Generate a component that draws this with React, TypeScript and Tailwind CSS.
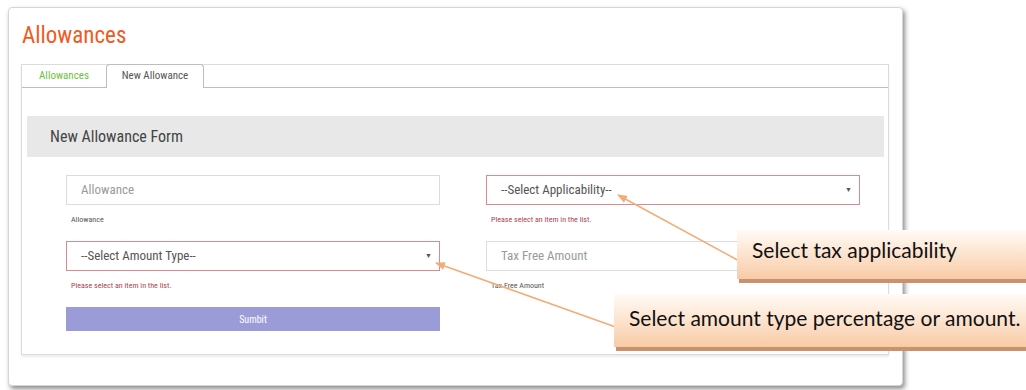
import { ReactNode } from "react";

const cond = "font-['Liberation_Sans_Narrow','Roboto_Condensed',Roboto,sans-serif]";

function Field({ placeholder, select, invalid, note, noteError }: {
  placeholder: string; select?: boolean; invalid?: boolean; note: string; noteError?: boolean;
}) {
  return (
    <div>
      <div
        className={`h-[30px] flex items-center justify-between pl-[14px] pr-[7px] border bg-white ${
          invalid ? "border-[#dc8a8f]" : "border-[#dcdcdc]"
        }`}
      >
        <span className={`text-[13px] ${select ? "text-[#555]" : "text-[#9a9a9a]"}`}>{placeholder}</span>
        {select && <span className="text-[7px] text-[#555]">▼</span>}
      </div>
      <div className="mt-[10px] h-[26px] pl-[5px]">
        <p className={`text-[8px] leading-[10px] ${noteError ? "text-[#a9444f]" : "text-[#555]"}`}>{note}</p>
      </div>
    </div>
  );
}

function Callout({ className, children }: { className: string; children: ReactNode }) {
  return (
    <div
      className={`absolute flex items-center bg-gradient-to-b from-[#fffbf6] to-[#f8cba6] shadow-[2px_4px_0_#c9916c] font-['Lato','Open_Sans',sans-serif] text-[21px] text-[#111] ${className}`}
    >
      {children}
    </div>
  );
}

export default function App() {
  return (
    <div className={`relative w-[1026px] h-[390px] bg-white overflow-hidden ${cond}`}>
      {/* card */}
      <div className="ml-[8px] mt-[7px] w-[895px] h-[379px] bg-white border border-[#d6d6d6] rounded-[4px] shadow-[2px_3px_5px_rgba(0,0,0,0.45)] pl-[12px]">
        <h1 className="pt-[14px] h-[56px] pl-[1px] text-[23px] leading-[28px] text-[#f05a22]">Allowances</h1>

        {/* tabs + panel */}
        <div className="w-[868px] border border-[#dcdcdc] shadow-[0_2px_2px_rgba(0,0,0,0.08)]">
          <div className="flex h-[23px] border-b border-[#bdbdbd]">
            <div className="w-[84px] flex items-center justify-center text-[11px] text-[#6cbf3c]">Allowances</div>
            <div className="w-[98px] h-[24px] -mt-[1px] flex items-center justify-center text-[11px] text-[#555] bg-white border border-[#bdbdbd] border-b-0 rounded-t-[4px]">
              New Allowance
            </div>
          </div>

          <div className="pt-[28px] pl-[5px] pr-[4px]">
            <div className="h-[41px] bg-[#e8e8e8] flex items-center pl-[23px]">
              <h2 className="text-[16px] text-[#444]">New Allowance Form</h2>
            </div>

            <div className="pt-[18px] pl-[39px] pb-[23px] grid grid-cols-[374px_374px] gap-x-[46px]">
              <Field placeholder="Allowance" note="Allowance" />
              <Field placeholder="--Select Applicability--" select invalid note="Please select an item in the list." noteError />
              <Field placeholder="--Select Amount Type--" select invalid note="Please select an item in the list." noteError />
              <Field placeholder="Tax Free Amount" note="Tax Free Amount" />
              <button className="h-[24px] bg-[#9b9bd7] text-white text-[10px]">Sumbit</button>
            </div>
          </div>
        </div>
      </div>

      {/* annotation arrows */}
      <svg className="absolute inset-0 pointer-events-none" width="1026" height="390">
        <defs>
          <marker id="ah" markerWidth="10" markerHeight="8" refX="9" refY="4" orient="auto-start-reverse" markerUnits="userSpaceOnUse">
            <path d="M0 0 L10 4 L0 8 z" fill="#f4ab76" />
          </marker>
        </defs>
        <line x1="743" y1="263" x2="618" y2="195" stroke="#f4ab76" strokeWidth="1.5" markerEnd="url(#ah)" />
        <line x1="624" y1="330" x2="436" y2="263" stroke="#f4ab76" strokeWidth="1.5" markerEnd="url(#ah)" />
      </svg>

      <Callout className="left-[737px] top-[230px] w-[300px] h-[49px] pl-[15px] pb-[10px]">Select tax applicability</Callout>
      <Callout className="left-[614px] top-[294px] w-[420px] h-[53px] pl-[15px] pb-[6px]">Select amount type percentage or amount.</Callout>
    </div>
  );
}
